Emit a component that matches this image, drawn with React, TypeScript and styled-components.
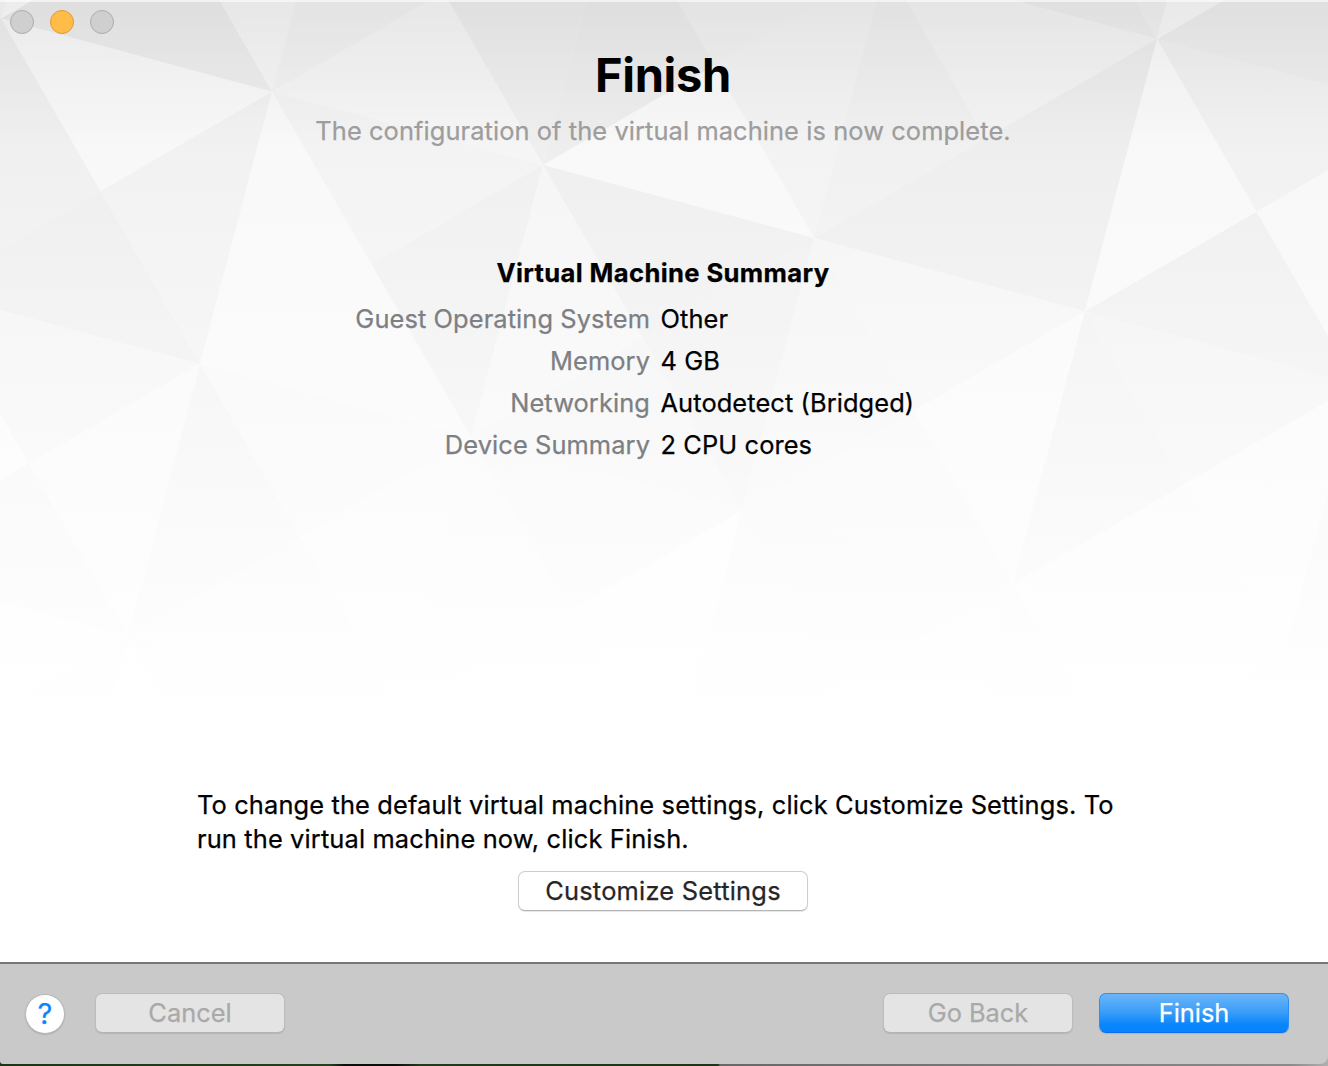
import React from 'react';
import styled, { createGlobalStyle } from 'styled-components';

const GlobalStyle = createGlobalStyle`
  *, *::before, *::after { box-sizing: border-box; }
  body { margin: 0; overflow: hidden; background: #fff; }
`;

const Window = styled.main`
  position: relative;
  display: flex;
  flex-direction: column;
  width: 1328px;
  height: 1066px;
  overflow: hidden;
  background: #fff;
  font-family: Inter, 'Liberation Sans', sans-serif;
  font-size: 25.4px;
  font-weight: 400;
  line-height: 34px;
  color: #000;
  -webkit-text-stroke: 0.25px currentColor;
`;

const Backdrop = styled.svg`
  position: absolute;
  inset: 0;
`;

const Content = styled.section`
  position: relative;
  flex: 0 0 962px;
  display: flex;
  flex-direction: column;
  align-items: center;
  padding-right: 2px;
`;

const TitleBar = styled.div`
  align-self: stretch;
  display: flex;
  gap: 16px;
  height: 44px;
  padding: 10px;
`;

const Light = styled.span<{ $active?: boolean }>`
  width: 24px;
  height: 24px;
  border-radius: 50%;
  border: 1px solid ${(p) => (p.$active ? '#e09a35' : '#adadad')};
  background: ${(p) => (p.$active ? '#ffbc48' : '#cfcfcf')};
`;

const Title = styled.h1`
  margin: 0;
  height: 62px;
  font-size: 47px;
  line-height: 62px;
  font-weight: 700;
  letter-spacing: -0.3px;
  -webkit-text-stroke: 0;
`;

const Subtitle = styled.p`
  margin: 8px 0 0;
  color: #9d9d9d;
  white-space: nowrap;
  letter-spacing: 0.09px;
`;

const SummaryTitle = styled.h2`
  margin: 108px 0 8px;
  font-size: 25.6px;
  line-height: 34px;
  font-weight: 700;
  letter-spacing: 0.37px;
`;

const SummaryGrid = styled.dl`
  display: grid;
  grid-template-columns: 650px 1fr;
  column-gap: 10.5px;
  align-self: stretch;
  margin: 0;
  line-height: 42px;
  letter-spacing: 0.1px;
`;

const Label = styled.dt`
  text-align: right;
  color: #7c7f83;
`;

const Value = styled.dd`
  margin: 0;
`;

const Hint = styled.p`
  align-self: flex-start;
  width: 960px;
  margin: 322px 0 0 197px;
  white-space: pre-line;
  letter-spacing: 0.14px;
`;

const Button = styled.button<{ $kind?: 'plain' | 'disabled' | 'primary' }>`
  width: 190px;
  height: 40px;
  padding: 0;
  border-radius: 7px;
  font: inherit;
  line-height: 36px;
  border: 1px solid
    ${(p) => (p.$kind === 'primary' ? '#2c90f3' : p.$kind === 'disabled' ? '#bcbcbc' : '#cdcdcd')};
  border-bottom-color: ${(p) => (p.$kind === 'primary' ? '#0670ee' : p.$kind === 'disabled' ? '#b4b4b4' : '#b5b5b5')};
  background: ${(p) =>
    p.$kind === 'primary'
      ? 'linear-gradient(#6cb5f8, #3a9df8 48%, #0a86fc 80%, #0582ff)'
      : p.$kind === 'disabled'
        ? '#e4e4e4'
        : '#fff'};
  color: ${(p) => (p.$kind === 'primary' ? '#fff' : p.$kind === 'disabled' ? '#a9a9a9' : '#262626')};
  box-shadow: 0 1px 1px rgba(0, 0, 0, 0.1);
`;

const CustomizeButton = styled(Button)`
  width: 290px;
  margin-top: 15px;
  letter-spacing: 0.23px;
`;

const Footer = styled.footer`
  position: relative;
  flex: 0 0 102px;
  display: flex;
  align-items: flex-start;
  padding: 29px 39px 0 26px;
  border-top: 2px solid #777;
  border-radius: 0 0 8px 3px;
  background: #c9c9c9;
`;

const HelpButton = styled.button`
  width: 38px;
  height: 38px;
  margin: 2px 31px 0 0;
  padding: 0;
  border: 0;
  border-radius: 50%;
  background: #fff;
  box-shadow: 0 0 0 1px #b9b9b9, 0 1px 2px rgba(0, 0, 0, 0.4);
  color: #0a84ff;
  font: inherit;
  font-size: 29px;
  line-height: 38px;
`;

const BackButton = styled(Button)`
  margin: 0 26px 0 auto;
`;

const DesktopEdge = styled.div`
  flex: 0 0 2px;
  margin-top: -8px;
  padding-top: 8px;
  box-sizing: content-box;
  background: linear-gradient(90deg, #1c3519 0, #24401d 330px, #0a0d0a 345px, #0a0d0a 395px, #203a1b 420px, #1d3418 718px, #686868 720px, #8a8a8a 1290px, #b0b0b0 100%);
`;

/* Each cell of the tilted square lattice is cut by both diagonals:
   [column, row, top, right, bottom, left], as darkness below white. */
const cells: number[][] = [
  [3, -2, 16, 17, 20, 16],
  [4, -2, 14, 14, 20, 10],
  [0, -1, 14, 12, 21, 6],
  [1, -1, 18, 20, 12, 16],
  [2, -1, 16, 15, 8, 21],
  [3, -1, 14, 21, 21.5, 18],
  [4, -1, 17, 9, 20, 8],
  [-1, 0, 14, 19, 14, 14],
  [0, 0, 9, 17, 21, 19],
  [1, 0, 15.5, 19, 8, 8],
  [2, 0, 20, 19, 15, 12.5],
  [3, 0, 13.5, 7.5, 12, 14],
  [4, 0, 16, 7, 8, 18],
  [5, 0, 14, 14, 14, 14],
  [0, 1, 14, 8, 15, 6],
  [1, 1, 11, 8, 12, 17],
  [2, 1, 13, 5, 6, 9],
  [3, 1, 13, 9, 5, 12],
  [4, 1, 6, 9, 8, 12],
  [5, 1, 8, 8, 8, 8],
  [0, 2, 6, 14, 5, 5],
  [1, 2, 14, 10, 8, 5],
];

const facets = cells.flatMap(([i, j, ...shades]) => {
  const x = 1 + 271 * i - 72 * j;
  const y = 18.5 + 73.2 * i + 272.3 * j;
  const corners = [
    [x, y],
    [x + 271, y + 73.2],
    [x + 199, y + 345.5],
    [x - 72, y + 272.3],
  ];
  const center = [x + 99.5, y + 172.75];
  return shades.map((shade, k) => ({
    points: [corners[k], corners[(k + 1) % 4], center].map((p) => p.join(',')).join(' '),
    level: 255 - shade,
  }));
});

function PolygonBackdrop() {
  return (
    <Backdrop width="1328" height="962" viewBox="0 0 1328 962" aria-hidden="true">
      <defs>
        <linearGradient id="fade" x1="0" y1="0" x2="0" y2="1">
          <stop offset="0" stopColor="#fff" stopOpacity="0" />
          <stop offset="1" stopColor="#fff" stopOpacity="1" />
        </linearGradient>
        <linearGradient id="shade" x1="0" y1="0" x2="0" y2="1">
          <stop offset="0" stopColor="#000" stopOpacity="0.05" />
          <stop offset="1" stopColor="#000" stopOpacity="0" />
        </linearGradient>
      </defs>
      <rect width="1328" height="720" fill="#f5f5f5" />
      {facets.map((f) => (
        <polygon key={f.points} points={f.points} fill={`rgb(${f.level},${f.level},${f.level})`} />
      ))}
      <rect width="1328" height="720" fill="url(#fade)" />
      <rect y="720" width="1328" height="242" fill="#fff" />
      <rect width="1328" height="150" fill="url(#shade)" />
      <rect width="1328" height="2" fill="#fff" opacity="0.6" />
    </Backdrop>
  );
}

const summary = [
  ['Guest Operating System', 'Other'],
  ['Memory', '4 GB'],
  ['Networking', 'Autodetect (Bridged)'],
  ['Device Summary', '2 CPU cores'],
];

export default function App() {
  return (
    <>
      <GlobalStyle />
      <Window>
        <PolygonBackdrop />
        <Content>
          <TitleBar>
            <Light />
            <Light $active />
            <Light />
          </TitleBar>
          <Title>Finish</Title>
          <Subtitle>The configuration of the virtual machine is now complete.</Subtitle>
          <SummaryTitle>Virtual Machine Summary</SummaryTitle>
          <SummaryGrid>
            {summary.map(([label, value]) => (
              <React.Fragment key={label}>
                <Label>{label}</Label>
                <Value>{value}</Value>
              </React.Fragment>
            ))}
          </SummaryGrid>
          <Hint>
            {'To change the default virtual machine settings, click Customize Settings. To\nrun the virtual machine now, click Finish.'}
          </Hint>
          <CustomizeButton>Customize Settings</CustomizeButton>
        </Content>
        <Footer>
          <HelpButton aria-label="Help">?</HelpButton>
          <Button $kind="disabled" disabled>Cancel</Button>
          <BackButton $kind="disabled" disabled>Go Back</BackButton>
          <Button $kind="primary">Finish</Button>
        </Footer>
        <DesktopEdge />
      </Window>
    </>
  );
}
